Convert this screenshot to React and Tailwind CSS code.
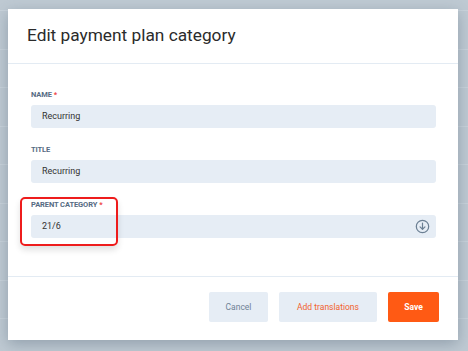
import React from 'react';

const Field = ({ label, required, value, select }) => (
    <div className="flex flex-col">
        <label className="h-3 mb-1 text-[7.5px] leading-[12px] font-bold uppercase text-[#566b83] tracking-[-0.1px]">
            {label}
            {required && <span className="text-[#ef4444] ml-[2px]">*</span>}
        </label>
        <div className="h-[23px] rounded-[3px] bg-[#e6edf5] flex items-center justify-between pl-[11px] pr-[6px] text-[9px] text-[#333]">
            <span>{value}</span>
            {select && (
                <svg width="15" height="15" viewBox="0 0 16 16" fill="none" stroke="#6b7f93" strokeWidth="1.3">
                    <circle cx="8" cy="8" r="6.6" />
                    <path d="M8 4.3v6.6M5.4 8.4 8 11l2.6-2.6" strokeLinecap="round" strokeLinejoin="round" />
                </svg>
            )}
        </div>
    </div>
);

const App = () => {
    const rows = Array.from({ length: 10 });

    return (
        <div className="relative w-[468px] h-[351px] overflow-hidden bg-[#bfcad3]" style={{ fontFamily: 'Roboto, "Liberation Sans", sans-serif' }}>
            {/* blurred page behind the modal */}
            <div className="absolute inset-0 flex flex-col pt-[10px]">
                {rows.map((_, i) => (
                    <div key={i} className="h-[38.5px] shrink-0 border-t border-[#c9d3db]" />
                ))}
            </div>

            <div className="relative ml-2 mt-[9px] w-[450px] h-[331px] bg-white shadow-[0_4px_14px_rgba(60,80,100,0.35)] flex flex-col">
                <div className="h-[55px] shrink-0 border-b border-[#e3ebf3] flex items-center pl-[19px]">
                    <h2 className="text-[17.3px] text-[#2b2b2b] font-normal">Edit payment plan category</h2>
                </div>

                <div className="h-[212px] shrink-0 pt-[25px] pl-[23px] pr-[22px] flex flex-col gap-4">
                    <Field label="Name" required value="Recurring" />
                    <Field label="Title" value="Recurring" />
                    <Field label="Parent category" required value="21/6" select />
                </div>

                <div className="flex-1 border-t border-[#e3ebf3] flex justify-end items-start pt-[15px] pr-[19px] gap-[11px]">
                    <button className="h-[30px] w-[59px] rounded-[2px] bg-[#e6edf5] text-[8.5px] text-[#6f8295]">Cancel</button>
                    <button className="h-[30px] w-[98px] rounded-[2px] bg-[#e6edf5] text-[8.5px] text-[#f2622e]">Add translations</button>
                    <button className="h-[30px] w-[51px] rounded-[2px] bg-[#ff5a14] text-[8.5px] font-bold text-white">Save</button>
                </div>

                {/* highlight annotation */}
                <div className="absolute left-[12px] top-[188px] w-[98px] h-[49px] rounded-[5px] border-2 border-[#ee1c1c] shadow-[0_4px_6px_rgba(0,0,0,0.12)]" />
            </div>
        </div>
    );
};

export default App;
